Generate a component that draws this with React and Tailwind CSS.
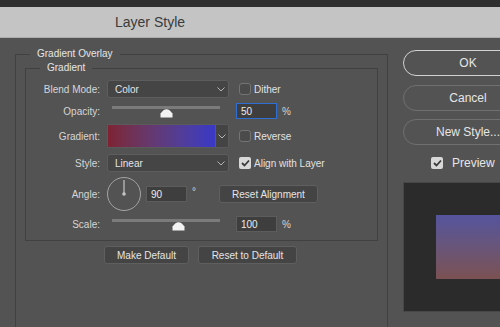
import React from "react";

function Chevron() {
  return (
    <svg width="8" height="5" viewBox="0 0 8 5" className="shrink-0">
      <path d="M0.5 0.5 L4 4 L7.5 0.5" fill="none" stroke="#b4b4b4" strokeWidth="1" />
    </svg>
  );
}

function Checkbox({ checked }) {
  if (checked) {
    return (
      <div className="w-[12px] h-[12px] rounded-[2px] bg-[#d8d8d8] flex items-center justify-center shrink-0">
        <svg width="9" height="8" viewBox="0 0 9 8">
          <path d="M1 4 L3.5 6.5 L8 1.5" fill="none" stroke="#3a3a3a" strokeWidth="1.8" />
        </svg>
      </div>
    );
  }
  return <div className="w-[12px] h-[12px] rounded-[3px] border border-[#747474] bg-[#4b4b4b] shrink-0" />;
}

function Select({ value }) {
  return (
    <div className="w-[122px] h-[18px] shrink-0 rounded-[3px] bg-[#454545] border border-[#5d5d5d] pl-[7px] pr-[3px] flex items-center justify-between text-[#e4e4e4]">
      <span>{value}</span>
      <Chevron />
    </div>
  );
}

function Slider({ thumb }) {
  return (
    <div className="w-[122px] h-[16px] shrink-0 relative">
      <div className="absolute left-[5px] top-[3px] w-[108px] h-[3px] bg-[#7b7b7b]" />
      <svg
        width="13"
        height="11"
        viewBox="0 0 13 11"
        className="absolute top-[4px]"
        style={{ left: thumb }}
      >
        <path d="M0.5 10.5 L0.5 6.5 Q6.5 -2 12.5 6.5 L12.5 10.5 Z" fill="#f2f2f2" />
      </svg>
    </div>
  );
}

function NumInput({ value, focused }) {
  return (
    <div
      className={`ml-[7px] w-[41px] h-[16px] shrink-0 pl-[4px] flex items-center bg-[#3e3e3e] text-[#ececec] border ${
        focused ? "border-[#2f6fd4]" : "border-[#5c5c5c]"
      }`}
    >
      {value}
    </div>
  );
}

function Label({ children }) {
  return <div className="w-[74px] mr-[7px] shrink-0 text-right">{children}</div>;
}

function App() {
  return (
    <div className="w-[500px] h-[327px] overflow-hidden bg-[#535353] font-['Liberation_Sans',Arial,sans-serif] text-[10px] text-[#d6d6d6] flex flex-col">
      <div className="h-[7px] shrink-0 bg-[#2f2f2f]" />
      <div className="h-[31px] shrink-0 bg-[#c4c4c4] border-b border-[#adadad] flex items-center pl-[115px] text-[14px] text-[#3b3b3b]">
        Layer Style
      </div>

      <div className="flex flex-1 min-h-0">
        <div className="pl-[15px] pt-[9px] shrink-0">
          <fieldset className="w-[373px] h-[300px] border border-[#414141]">
            <legend className="ml-[14px] px-[7px] leading-[14px] text-[#e6e6e6]">Gradient Overlay</legend>

            <fieldset className="ml-[9px] w-[353px] border border-[#414141] pt-[5px] pb-[8px]">
              <legend className="ml-[14px] px-[7px] leading-[14px] text-[#e6e6e6]">Gradient</legend>

              <div className="flex items-center h-[18px]">
                <Label>Blend Mode:</Label>
                <Select value="Color" />
                <div className="ml-[10px]">
                  <Checkbox />
                </div>
                <span className="ml-[3px] text-[#e2e2e2]">Dither</span>
              </div>

              <div className="flex items-center h-[16px] mt-[5px]">
                <Label>Opacity:</Label>
                <Slider thumb={53} />
                <NumInput value="50" focused />
                <span className="ml-[5px]">%</span>
              </div>

              <div className="flex items-center h-[24px] mt-[5px]">
                <Label>Gradient:</Label>
                <div className="w-[122px] h-[24px] shrink-0 flex border border-[#5a5a5a] rounded-[2px] overflow-hidden">
                  <div className="flex-1 bg-gradient-to-r from-[#7d2232] to-[#3938c6]" />
                  <div className="w-[13px] bg-[#444444] border-l border-[#5a5a5a] flex items-center justify-center">
                    <Chevron />
                  </div>
                </div>
                <div className="ml-[10px]">
                  <Checkbox />
                </div>
                <span className="ml-[3px] text-[#e2e2e2]">Reverse</span>
              </div>

              <div className="flex items-center h-[18px] mt-[6px]">
                <Label>Style:</Label>
                <Select value="Linear" />
                <div className="ml-[10px]">
                  <Checkbox checked />
                </div>
                <span className="ml-[3px] text-[#e2e2e2]">Align with Layer</span>
              </div>

              <div className="flex items-center h-[34px] mt-[5px]">
                <Label>Angle:</Label>
                <svg width="34" height="34" viewBox="0 0 34 34" className="shrink-0">
                  <circle cx="17" cy="17" r="16.5" fill="none" stroke="#a4a4a4" strokeWidth="1" />
                  <line x1="17" y1="3" x2="17" y2="17" stroke="#c4c4c4" strokeWidth="1.2" />
                  <circle cx="17" cy="17" r="1.8" fill="#c4c4c4" />
                </svg>
                <div className="-ml-[2px]">
                  <NumInput value="90" />
                </div>
                <span className="w-[32px] pl-[5px] -mt-[5px] shrink-0">°</span>
                <div className="w-[99px] h-[18px] shrink-0 rounded-[3px] bg-[#444444] border border-[#5f5f5f] flex items-center justify-center text-[#e4e4e4]">
                  Reset Alignment
                </div>
              </div>

              <div className="flex items-center h-[16px] mt-[5px]">
                <Label>Scale:</Label>
                <Slider thumb={65} />
                <NumInput value="100" />
                <span className="ml-[5px]">%</span>
              </div>
            </fieldset>

            <div className="flex gap-[9px] ml-[88px] mt-[5px]">
              <div className="w-[85px] h-[18px] rounded-[3px] bg-[#444444] border border-[#5f5f5f] flex items-center justify-center text-[#e4e4e4]">
                Make Default
              </div>
              <div className="w-[99px] h-[18px] rounded-[3px] bg-[#444444] border border-[#5f5f5f] flex items-center justify-center text-[#e4e4e4]">
                Reset to Default
              </div>
            </div>
          </fieldset>
        </div>

        <div className="ml-[15px] pt-[12px] w-[130px] shrink-0 flex flex-col text-[12px] text-[#e6e6e6]">
          <div className="h-[26px] rounded-full border border-[#d2d2d2] flex items-center justify-center">OK</div>
          <div className="h-[26px] mt-[9px] rounded-full border border-[#707070] flex items-center justify-center">Cancel</div>
          <div className="h-[26px] mt-[8px] rounded-full border border-[#707070] flex items-center justify-center">New Style...</div>
          <div className="flex items-center h-[12px] mt-[12px] ml-[28px]">
            <Checkbox checked />
            <span className="ml-[9px]">Preview</span>
          </div>
          <div className="h-[130px] mt-[13px] border border-[#474747] bg-[#2b2b2b] pt-[32px] pl-[32px]">
            <div className="h-[64px] w-[100px] bg-gradient-to-b from-[#55549d] to-[#7b5152]" />
          </div>
        </div>
      </div>
    </div>
  );
}

export default App;
